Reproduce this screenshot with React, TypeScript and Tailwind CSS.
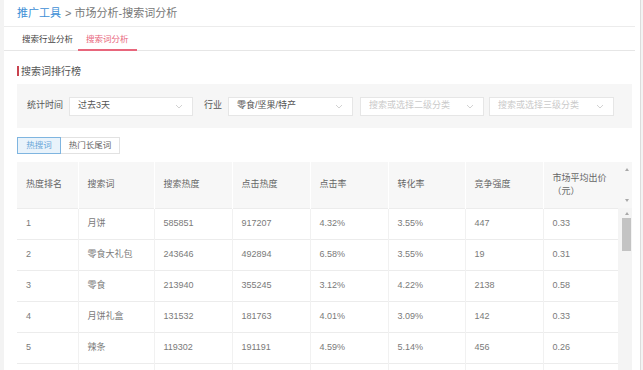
import React from 'react';

const rows = [
  ['1', '月饼', '585851', '917207', '4.32%', '3.55%', '447', '0.33'],
  ['2', '零食大礼包', '243646', '492894', '6.58%', '3.55%', '19', '0.31'],
  ['3', '零食', '213940', '355245', '3.12%', '4.22%', '2138', '0.58'],
  ['4', '月饼礼盒', '131532', '181763', '4.01%', '3.09%', '142', '0.33'],
  ['5', '辣条', '119302', '191191', '4.59%', '5.14%', '456', '0.26'],
  ['', '', '', '', '', '', '', ''],
];

const cols = [61, 76, 78, 78, 78, 77, 78, 75];

function Chevron() {
  return (
    <svg width="8" height="5" viewBox="0 0 8 5" className="shrink-0">
      <path d="M1 1l3 3 3-3" fill="none" stroke="#d2d2d2" strokeWidth="1" />
    </svg>
  );
}

function Select({ width, value, placeholder }: { width: string; value?: string; placeholder?: string }) {
  return (
    <div className={`${width} h-[19px] bg-white border border-[#e6e6e6] flex items-center justify-between pl-[8px] pr-[9px]`}>
      <span className={value ? 'text-[#555]' : 'text-[#cacaca]'}>{value || placeholder}</span>
      <Chevron />
    </div>
  );
}

export default function App() {
  return (
    <div
      className="w-[643px] h-[370px] overflow-hidden bg-[#f3f3f3] flex"
      style={{ fontFamily: '"Liberation Sans", "Noto Sans CJK SC", sans-serif' }}
    >
      <div className="ml-[4px] w-[637px] h-full bg-white border-r border-[#dcdcdc] flex flex-col">
        {/* breadcrumb */}
        <div className="shrink-0 h-[27px] mr-[5px] border-b border-[#ececec] flex items-center pl-[13px] text-[11px]">
          <span className="text-[#3e8fd6]">推广工具</span>
          <span className="text-[#777] ml-[4px]">&gt; 市场分析-搜索词分析</span>
        </div>

        {/* tabs */}
        <div className="shrink-0 h-[24px] mr-[5px] border-b border-[#e6e6e6] flex items-stretch pl-[18px] text-[8.5px]">
          <div className="flex items-center text-[#444] pt-[2px]">搜索行业分析</div>
          <div className="ml-[5px] px-[8px] pt-[2px] flex items-center text-[#e8667c] border-b-2 border-[#e8667c] -mb-px">
            搜索词分析
          </div>
        </div>

        {/* section title */}
        <div className="shrink-0 mt-[14px] pl-[13px] flex items-center h-[12px]">
          <div className="w-[2px] h-[10px] bg-[#c9434f]" />
          <span className="ml-[2px] text-[10px] text-[#555]">搜索词排行榜</span>
        </div>

        {/* filters */}
        <div className="shrink-0 mt-[7px] ml-[13px] w-[615px] h-[44px] bg-[#f6f6f6] flex items-center pl-[10px] text-[9px]">
          <span className="text-[#555]">统计时间</span>
          <div className="ml-[6px]">
            <Select width="w-[124px]" value="过去3天" />
          </div>
          <span className="ml-[11px] text-[#555]">行业</span>
          <div className="ml-[6px]">
            <Select width="w-[125px]" value="零食/坚果/特产" />
          </div>
          <div className="ml-[7px]">
            <Select width="w-[124px]" placeholder="搜索或选择二级分类" />
          </div>
          <div className="ml-[5px]">
            <Select width="w-[125px]" placeholder="搜索或选择三级分类" />
          </div>
        </div>

        {/* toggle buttons */}
        <div className="shrink-0 mt-[9px] ml-[13px] flex text-[8.5px]">
          <div className="w-[44px] h-[17px] border border-[#7fb5e0] bg-[#e9f3fb] text-[#6aa6d8] flex items-center justify-center">
            热搜词
          </div>
          <div className="w-[59px] h-[17px] border border-l-0 border-[#e2e2e2] text-[#666] flex items-center justify-center">
            热门长尾词
          </div>
        </div>

        {/* table */}
        <div className="shrink-0 mt-[8px] ml-[13px] flex">
          <table className="table-fixed border-collapse w-[601px] text-[9px] text-[#7a7a7a]">
            <colgroup>
              {cols.map((w, i) => (
                <col key={i} style={{ width: w }} />
              ))}
            </colgroup>
            <thead>
              <tr className="h-[46px] bg-[#f7f7f7] text-[#666]">
                {['热度排名', '搜索词', '搜索热度', '点击热度', '点击率', '转化率', '竞争强度'].map((h, i) => (
                  <th key={i} className="font-normal text-left align-middle pl-[9px] border-r border-white">
                    {h}
                  </th>
                ))}
                <th className="font-normal text-left align-middle pl-[9px] leading-[13px]">
                  市场平均出价
                  <br />
                  （元）
                </th>
              </tr>
            </thead>
            <tbody>
              {rows.map((r, ri) => (
                <tr key={ri} className="h-[31px] border-t border-[#ececec]">
                  {r.map((c, ci) => (
                    <td key={ci} className={`pl-[9px] align-middle ${ci < 7 ? 'border-r border-[#f1f1f1]' : ''}`}>
                      {c}
                    </td>
                  ))}
                </tr>
              ))}
            </tbody>
          </table>

          {/* scrollbar */}
          <div className="w-[14px] flex flex-col">
            <div className="h-[46px] bg-[#f7f7f7] flex flex-col items-center justify-between py-[6px] pl-[3px]">
              <div className="w-0 h-0 border-l-[2px] border-r-[2px] border-b-[3px] border-l-transparent border-r-transparent border-b-[#a9a9a9]" />
              <div className="w-0 h-0 border-l-[2px] border-r-[2px] border-t-[3px] border-l-transparent border-r-transparent border-t-[#a9a9a9]" />
            </div>
            <div className="flex-1 bg-[#f4f4f4] flex flex-col items-center pl-[3px]">
              <div className="mt-[4px] w-0 h-0 border-l-[2px] border-r-[2px] border-b-[3px] border-l-transparent border-r-transparent border-b-[#a9a9a9]" />
              <div className="mt-[3px] w-[9px] h-[33px] bg-[#c3c3c3]" />
            </div>
          </div>
        </div>
      </div>
    </div>
  );
}
